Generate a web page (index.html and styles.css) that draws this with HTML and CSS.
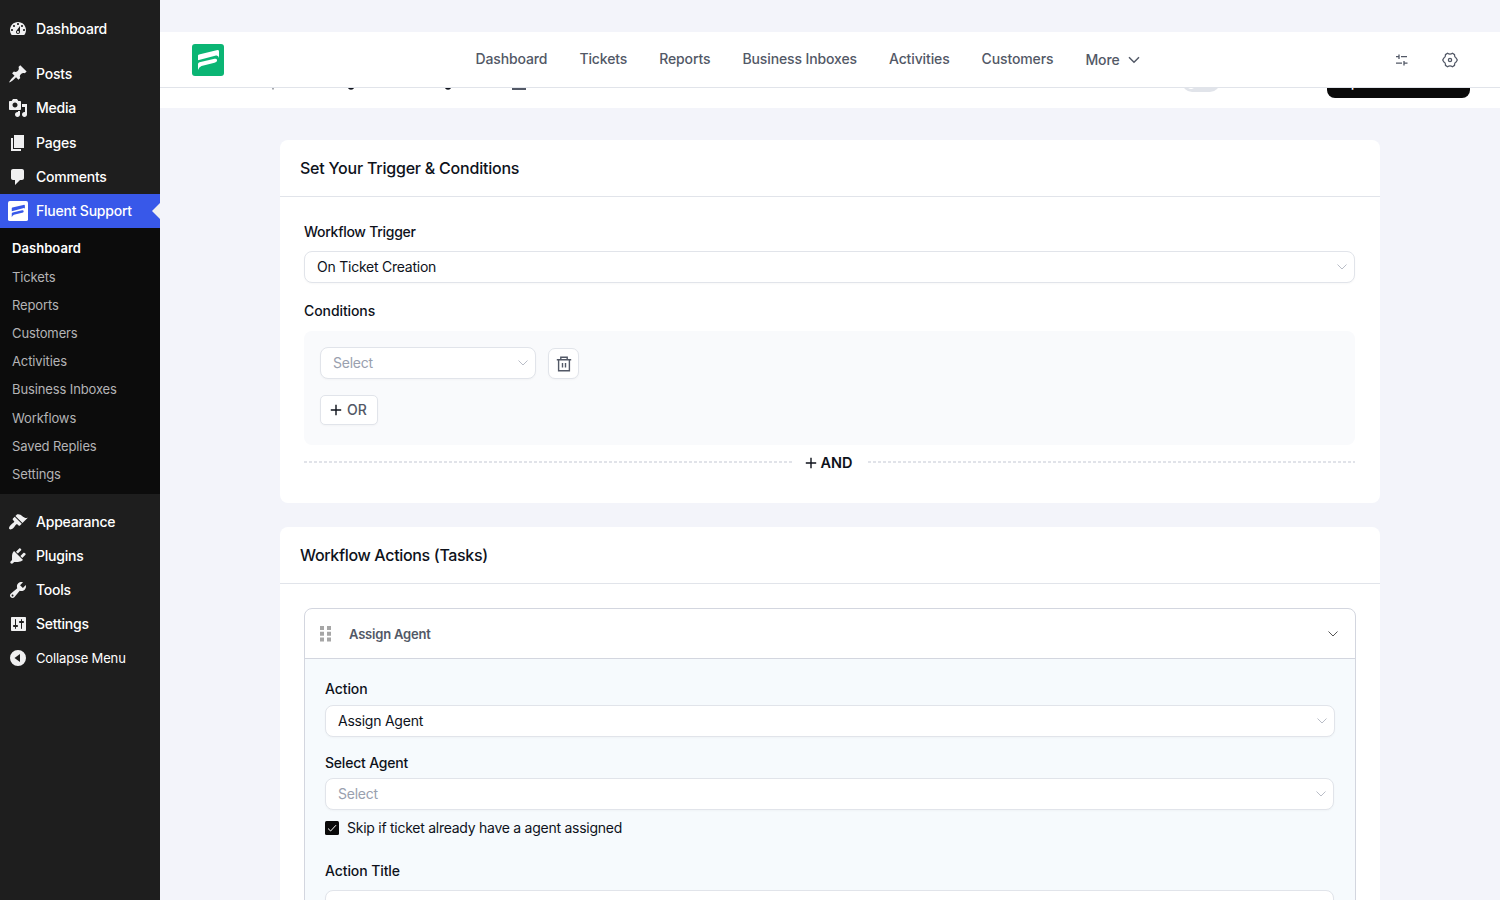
FILE: index.html
```html
<!DOCTYPE html>
<html lang="en">
<head>
<meta charset="utf-8">
<meta name="viewport" content="width=device-width, initial-scale=1">
<title>Fluent Support</title>
<link rel="stylesheet" href="styles.css">
</head>
<body>

<aside class="sidebar">
    <a class="menu_item"><svg viewBox="0 0 20 20"><path fill-rule="evenodd" d="M3.76 16h12.48c1.1-1.37 1.76-3.11 1.76-5 0-4.42-3.58-8-8-8s-8 3.58-8 8c0 1.89.66 3.63 1.76 5zM10 4c.55 0 1 .45 1 1s-.45 1-1 1-1-.45-1-1 .45-1 1-1zM6 6c.55 0 1 .45 1 1s-.45 1-1 1-1-.45-1-1 .45-1 1-1zm8 0c.55 0 1 .45 1 1s-.45 1-1 1-1-.45-1-1 .45-1 1-1zm-5.37 5.55L12 7v6c0 1.1-.9 2-2 2s-2-.9-2-2c0-.57.24-1.08.63-1.45zM4 10c.55 0 1 .45 1 1s-.45 1-1 1-1-.45-1-1 .45-1 1-1zm12 0c.55 0 1 .45 1 1s-.45 1-1 1-1-.45-1-1 .45-1 1-1zm-5 3c0-.55-.45-1-1-1s-1 .45-1 1 .45 1 1 1 1-.45 1-1z"/></svg>Dashboard</a>
    <div class="separator"></div>
    <a class="menu_item"><svg viewBox="0 0 20 20"><path d="M10.44 3.02l1.82-1.82 6.36 6.35-1.83 1.82c-1.05-.68-2.48-.57-3.41.36l-.75.75c-.92.93-1.04 2.35-.35 3.41l-1.83 1.82-2.41-2.41-2.8 2.79c-.42.42-3.38 2.71-3.8 2.29s1.86-3.39 2.28-3.81l2.79-2.79L4.1 9.36l1.83-1.82c1.05.69 2.48.57 3.4-.36l.75-.75c.93-.92 1.05-2.35.36-3.41z"/></svg>Posts</a>
    <a class="menu_item"><svg viewBox="0 0 20 20"><path fill-rule="evenodd" d="M13 11V4c0-.55-.45-1-1-1h-1.67L9 1H5L3.67 3H2c-.55 0-1 .45-1 1v7c0 .55.45 1 1 1h10c.55 0 1-.45 1-1zM7 4.5c1.38 0 2.5 1.12 2.5 2.5S8.38 9.5 7 9.5 4.5 8.38 4.5 7 5.62 4.5 7 4.5zM14 6h5v10.5c0 1.38-1.12 2.5-2.5 2.5S14 17.88 14 16.5s1.12-2.5 2.5-2.5c.17 0 .34.02.5.05V9h-3V6zm-4 8.05V13h2v3.5c0 1.38-1.12 2.5-2.5 2.5S7 17.88 7 16.5 8.12 14 9.5 14c.17 0 .34.02.5.05z"/></svg>Media</a>
    <a class="menu_item"><svg viewBox="0 0 20 20"><path d="M6 15V2h10v13H6zm-1 1h8v2H3V5h2v11z"/></svg>Pages</a>
    <a class="menu_item"><svg viewBox="0 0 20 20"><path d="M5 2h9c1.1 0 2 .9 2 2v7c0 1.1-.9 2-2 2h-2l-5 5v-5H5c-1.1 0-2-.9-2-2V4c0-1.1.9-2 2-2z"/></svg>Comments</a>
    <a class="menu_item current"><svg viewBox="0 0 32 32"><rect width="32" height="32" rx="3"/><path class="mark" d="M6 11.500Q6 10.800 7 10.500L24.500 6.300Q27 5.600 27 7.500V12Q26.500 11 24 11.500L6 16.500zM6 20Q6 18.800 7.500 18.300L22.500 14.800Q25 14.500 25 16V17Q24.500 18.200 22.500 18.700L9.500 22Q7 23 6 26z"/></svg>Fluent Support</a>
    <div class="submenu">
        <a class="active">Dashboard</a>
        <a>Tickets</a>
        <a>Reports</a>
        <a>Customers</a>
        <a>Activities</a>
        <a>Business Inboxes</a>
        <a>Workflows</a>
        <a>Saved Replies</a>
        <a>Settings</a>
    </div>
    <div class="separator"></div>
    <a class="menu_item"><svg viewBox="0 0 20 20"><path d="M14.48 11.06L7.41 3.99l1.5-1.5c.5-.56 2.3-.47 3.51.32 1.21.8 1.43 1.28 2.91 2.1 1.18.64 2.45 1.26 4.45.85zm-.71.71L6.7 4.7 4.93 6.47c-.39.39-.39 1.02 0 1.41l1.06 1.06c.39.39.39 1.03 0 1.42-.6.6-1.43 1.11-2.21 1.69-.35.26-.7.53-1.01.84C1.43 14.23.4 16.08 1.4 17.07c.99 1 2.84-.03 4.18-1.36.31-.31.58-.66.85-1.02.57-.78 1.08-1.61 1.69-2.21.39-.39 1.02-.39 1.41 0l1.06 1.06c.39.39 1.02.39 1.41 0z"/></svg>Appearance</a>
    <a class="menu_item"><svg viewBox="0 0 20 20"><path d="M13.11 4.36L9.87 7.6 8 5.73l3.24-3.24c.35-.34 1.05-.2 1.56.32.52.51.66 1.21.31 1.55zm-8 1.77l.91-1.12 9.01 9.01-1.19.84c-.71.71-2.63 1.16-3.82 1.16H6.14L4.9 17.26c-.59.59-1.54.59-2.12 0-.59-.58-.59-1.53 0-2.12l1.24-1.24v-3.88c0-1.13.4-3.19 1.09-3.89zm7.26 3.97l3.24-3.24c.34-.35 1.04-.21 1.55.31.52.51.66 1.21.31 1.55l-3.24 3.25z"/></svg>Plugins</a>
    <a class="menu_item"><svg viewBox="0 0 20 20"><path fill-rule="evenodd" d="M16.68 9.77c-1.34 1.34-3.3 1.67-4.95.99l-5.41 6.52c-.99.99-2.59.99-3.58 0s-.99-2.59 0-3.57l6.52-5.42c-.68-1.65-.35-3.61.99-4.95 1.28-1.28 3.12-1.62 4.72-1.06l-2.89 2.89 2.82 2.82 2.86-2.87c.53 1.58.18 3.39-1.08 4.65zM3.81 16.21c.4.39 1.04.39 1.43 0 .4-.4.4-1.04 0-1.43-.39-.4-1.03-.4-1.43 0-.39.39-.39 1.03 0 1.43z"/></svg>Tools</a>
    <a class="menu_item"><svg viewBox="0 0 20 20"><path fill-rule="evenodd" d="M18 16V4c0-.55-.45-1-1-1H4c-.55 0-1 .45-1 1v12c0 .55.45 1 1 1h13c.55 0 1-.45 1-1zM8 11h1c.55 0 1 .45 1 1s-.45 1-1 1H8v1.500c0 .28-.22.5-.5.5s-.5-.22-.5-.5V13H6c-.55 0-1-.45-1-1s.45-1 1-1h1V5.500c0-.28.22-.5.5-.5s.5.22.5.5V11zm5-2h-1c-.55 0-1-.45-1-1s.45-1 1-1h1V5.500c0-.28.22-.5.5-.5s.5.22.5.5V7h1c.55 0 1 .45 1 1s-.45 1-1 1h-1v5.500c0 .28-.22.5-.5.5s-.5-.22-.5-.5V9z"/></svg>Settings</a>
    <a class="menu_item collapse"><svg viewBox="0 0 20 20"><path fill-rule="evenodd" d="M10 2a8 8 0 1 0 0 16 8 8 0 0 0 0-16zM12 6v8l-5.500-4z"/></svg>Collapse Menu</a>
</aside>

<main class="main">
    <header class="header">
        <svg class="logo" viewBox="0 0 32 32"><rect width="32" height="32" rx="3" fill="#0bb574"/><path fill="#fff" d="M6 11.500Q6 10.800 7 10.500L24.500 6.300Q27 5.600 27 7.500V14Q26.500 11 24 11.500L6 16.200zM6 20Q6 18.800 7.500 18.300L22.500 14.800Q25 14.500 25 16V17Q24.500 18.200 22.500 18.700L9.500 22Q7 23 6 26z"/></svg>
        <nav class="nav">
            <a>Dashboard</a>
            <a>Tickets</a>
            <a>Reports</a>
            <a>Business Inboxes</a>
            <a>Activities</a>
            <a>Customers</a>
            <a class="more">More <svg width="12" height="8" viewBox="0 0 12 8"><path d="M1 1.200l5 5 5-5"/></svg></a>
        </nav>
        <div class="tools">
            <svg width="16" height="16" viewBox="0 0 16 16"><path d="M2 4.700h3M5 2.500v4.500M7 4.700h6M2 11.200h6M10 9v4.500M10 11.200h3.500"/></svg>
            <svg width="16" height="16" viewBox="0 0 16 16"><path d="M3.500 2.600L5.500 1.300q2.500 1.800 5 0l2 1.300q-.2 2.600 1.600 3.400L15.300 8l-1.200 2q-1.800.8-1.600 3.400l-2 1.300q-2.500-1.800-5 0l-2-1.300q.2-2.600-1.600-3.400L.7 8l1.200-2q1.800-.8 1.600-3.400z"/><circle cx="8" cy="8" r="1.600"/></svg>
        </div>
    </header>

    <div class="page_bar">
        <svg class="bar_title" width="260" height="4" viewBox="0 0 260 4"><path fill="#a5a7ad" d="M2 0h2v1.500H2z"/><path fill="#0e121b" d="M78 0h6q-.5 1.800-3 1.800T78 0zM175 0h6q-.5 1.800-3 1.800T175 0z"/><path fill="#525866" d="M242 0h14v2h-14z"/></svg>
        <span class="switch"></span>
        <button class="update">Update Workflow</button>
    </div>

    <div class="content">
        <section class="card">
            <h2>Set Your Trigger &amp; Conditions</h2>
            <div class="card_body">
                <label class="trigger_label">Workflow Trigger</label>
                <div class="select">On Ticket Creation <svg viewBox="0 0 10 6"><path d="M.5.5L5 5 9.500.5"/></svg></div>
                <label class="cond_label">Conditions</label>
                <div class="conditions">
                    <div class="cond_row">
                        <div class="select empty">Select <svg viewBox="0 0 10 6"><path d="M.5.5L5 5 9.500.5"/></svg></div>
                        <button class="trash"><svg width="16" height="16" viewBox="0 0 16 16"><path d="M.8 3.700h14.400M2.600 3.700v11h10.800v-11M4.800 3.700V1.200h6.400v2.500M6.500 7v4.500M9.500 7v4.500"/></svg></button>
                    </div>
                    <button class="or"><svg width="12" height="12" viewBox="0 0 12 12"><path d="M6 .8v10.400M.8 6h10.400"/></svg>OR</button>
                </div>
                <div class="and"><i></i><span><svg width="12" height="12" viewBox="0 0 12 12"><path d="M6 .8v10.400M.8 6h10.400"/></svg>AND</span><i></i></div>
            </div>
        </section>

        <section class="card">
            <h2 class="tasks_title">Workflow Actions (Tasks)</h2>
            <div class="card_body">
                <div class="task">
                    <div class="task_head">
                        <svg width="12" height="16" viewBox="0 0 12 16"><path d="M0 0h4v4H0zM7 0h4v4H7zM0 5.700h4v4H0zM7 5.700h4v4H7zM0 11.400h4v4H0zM7 11.400h4v4H7z"/></svg>
                        <span>Assign Agent</span>
                        <svg class="arrow" width="10" height="6" viewBox="0 0 10 6"><path d="M.5.5L5 5 9.500.5"/></svg>
                    </div>
                    <div class="task_body">
                        <label>Action</label>
                        <div class="select">Assign Agent <svg viewBox="0 0 10 6"><path d="M.5.5L5 5 9.500.5"/></svg></div>
                        <label class="agent_label">Select Agent</label>
                        <div class="select empty short">Select <svg viewBox="0 0 10 6"><path d="M.5.5L5 5 9.500.5"/></svg></div>
                        <div class="check"><svg width="14" height="14" viewBox="0 0 14 14"><rect width="14" height="14" rx="1.500" fill="#0a0a0a"/><path d="M3 7.500l2.600 2.500L11 4.200" fill="none" stroke="#fff"/></svg>Skip if ticket already have a agent assigned</div>
                        <label class="title_label">Action Title</label>
                        <div class="select short"></div>
                    </div>
                </div>
            </div>
        </section>
    </div>
</main>

</body>
</html>
```
FILE: styles.css
```css
*,*:after,*:before{
  box-sizing: border-box;
}
body{
  font-family: Inter, "Liberation Sans", sans-serif;
  font-size: 14px;
  line-height: 20px;
  margin: 0;
  height: 900px;
  overflow: hidden;
  display: flex;
  background: #f3f4fa;
  color: #0e121b;
}
svg{
  display: block;
  flex: none;
}
button{
  font-family: inherit;
  font-size: 14px;
  padding: 0;
  background: #fff;
  border: 1px solid #e1e4ea;
}

/* sidebar */
.sidebar{
  width: 160px;
  height: 900px;
  flex: none;
  padding-top: 12px;
  background: #1e1e1e;
  color: #fff;
}
.menu_item{
  display: flex;
  align-items: center;
  gap: 8px;
  height: 34.200px;
  padding-left: 8px;
  font-weight: 500;
  letter-spacing: -.22px;
  position: relative;
}
.menu_item svg{
  width: 20px;
  height: 20px;
  fill: #f0f0f1;
}
.separator{
  height: 11px;
}
.current{
  background: #3858e9;
}
.current svg{
  fill: #fff;
}
.current .mark{
  fill: #3858e9;
}
.current:after{
  content: "";
  position: absolute;
  right: 0;
  top: 9px;
  border: 8px solid transparent;
  border-right-color: #f0f0f1;
  border-left: 0;
}
.submenu{
  height: 265.500px;
  padding: 6.300px 0 0 12px;
  background: #0c0c0c;
  color: #b4b4b6;
  font-size: 13px;
  letter-spacing: -.12px;
}
.submenu a{
  display: block;
  height: 28.200px;
  line-height: 28px;
}
.submenu .active{
  color: #fff;
  font-weight: 600;
  letter-spacing: .05px;
}
.collapse{
  font-size: 13px;
  font-weight: 400;
  letter-spacing: -.15px;
}

/* top header */
.main{
  flex: 1;
  height: 900px;
  padding-top: 32px;
  overflow: hidden;
}
.header{
  position: relative;
  z-index: 2;
  display: flex;
  align-items: center;
  justify-content: space-between;
  height: 56px;
  padding: 0 42px 0 32px;
  background: #fff;
  border-bottom: 1px solid #e1e4ea;
}
.logo{
  width: 32px;
  height: 32px;
}
.nav{
  display: flex;
  gap: 32px;
  color: #525866;
  font-weight: 500;
  letter-spacing: -.12px;
  height: 22px;
  margin-right: 3px;
}
.nav .more{
  display: flex;
  align-items: center;
  gap: 8px;
  padding-top: 1px;
}
.nav svg, .tools svg{
  fill: none;
  stroke: #525866;
  stroke-width: 1.500;
}
.tools{
  display: flex;
  gap: 32px;
}
.tools svg{
  stroke-width: 1.300;
}

/* title bar, scrolled under the header */
.page_bar{
  display: flex;
  align-items: center;
  height: 56px;
  margin-top: -36px;
  padding: 0 30px 0 110px;
  background: #fff;
}
.bar_title{
  margin-top: 20px;
}
.switch{
  width: 38px;
  height: 20px;
  margin: 4px 107px 0 auto;
  border-radius: 10px;
  background: radial-gradient(circle at 9px 9px, #fff 7.500px, #e1e4ea 8px);
}
.update{
  width: 143px;
  height: 36px;
  padding-top: 2px;
  border: 0;
  border-radius: 8px;
  background: #0a0a0a;
  color: #fff;
  font-weight: 500;
}

/* cards */
.content{
  width: 1100px;
  margin: 32px auto 0;
}
.card{
  background: #fff;
  border-radius: 8px;
  margin-bottom: 24px;
}
.card h2{
  margin: 0;
  height: 57px;
  padding: 0 20px;
  border-bottom: 1px solid #e1e4ea;
  font-size: 16px;
  font-weight: 500;
  letter-spacing: -.22px;
  line-height: 56px;
}
.card .tasks_title{
  letter-spacing: -.33px;
}
.card_body{
  padding: 24px 24px 31px;
}
label{
  display: block;
  font-weight: 500;
  letter-spacing: -.09px;
  line-height: 22px;
}
.trigger_label{
  letter-spacing: -.28px;
}
.select{
  display: flex;
  align-items: center;
  justify-content: space-between;
  width: 1051px;
  height: 32px;
  padding: 0 7px 0 12px;
  background: #fff;
  border: 1px solid #e1e4ea;
  border-radius: 8px;
  box-shadow: 0 1px 2px rgba(10,13,20,.03);
  letter-spacing: -.24px;
}
.select svg{
  width: 10px;
  height: 6px;
  fill: none;
  stroke: #b9bdc7;
}
.empty{
  color: #99a0ae;
}
.card_body > label + .select{
  margin-top: 8px;
}
.cond_label{
  margin: 17px 0 9px;
}
.conditions{
  width: 1051px;
  height: 114px;
  padding: 16px;
  background: #f9fafc;
  border-radius: 8px;
}
.cond_row{
  display: flex;
  align-items: center;
  gap: 12px;
  margin-bottom: 16px;
}
.cond_row .select{
  width: 216px;
}
.trash, .or{
  display: flex;
  align-items: center;
  justify-content: center;
  box-shadow: 0 1px 2px rgba(10,13,20,.03);
}
.trash{
  width: 31px;
  height: 31px;
  margin-top: 1px;
  border-radius: 7px;
}
.trash svg{
  fill: none;
  stroke: #525866;
  stroke-width: 1.400;
}
.or{
  width: 58px;
  height: 30px;
  gap: 5px;
  padding: 0 1px 1px 0;
  border-radius: 5px;
  color: #525866;
  font-weight: 500;
}
.or svg, .and svg{
  fill: none;
  stroke: #0e121b;
  stroke-width: 1.400;
}
.and{
  display: flex;
  align-items: center;
  width: 1051px;
  height: 20px;
  margin-top: 7px;
  font-size: 14.500px;
  font-weight: 600;
}
.and i{
  flex: 1;
  height: 2px;
  background: repeating-linear-gradient(to right, #e1e3e9 0 3px, #fff 3px 5px);
}
.and i:first-child{
  flex-basis: 3px;
}
.and span{
  display: flex;
  align-items: center;
  gap: 3px;
  padding: 1px 15px 0 11px;
}

/* workflow task */
.task{
  border: 1px solid #d3d6df;
  border-radius: 8px 8px 0 0;
  height: 400px;
}
.task_head{
  display: flex;
  align-items: center;
  height: 50px;
  padding: 0 17px 0 15px;
  border-bottom: 1px solid #d3d6df;
  font-size: 13px;
  font-weight: 600;
  letter-spacing: -.2px;
  color: #525866;
}
.task_head svg{
  fill: #a6a6a6;
}
.task_head span{
  margin-left: 17px;
}
.task_head .arrow{
  margin-left: auto;
  fill: none;
  stroke: #555;
}
.task_body{
  height: 348px;
  padding: 19px 20px;
  background: #f6fafd;
}
.task_body .select{
  width: 1010px;
  margin-top: 5px;
}
.task_body .short{
  width: 1009px;
}
.agent_label{
  margin: 15px 0 -1px;
  letter-spacing: -.2px;
}
.check{
  display: flex;
  align-items: center;
  gap: 8px;
  margin-top: 8px;
  letter-spacing: -.26px;
}
.title_label{
  margin: 22px 0 8px;
}
```
